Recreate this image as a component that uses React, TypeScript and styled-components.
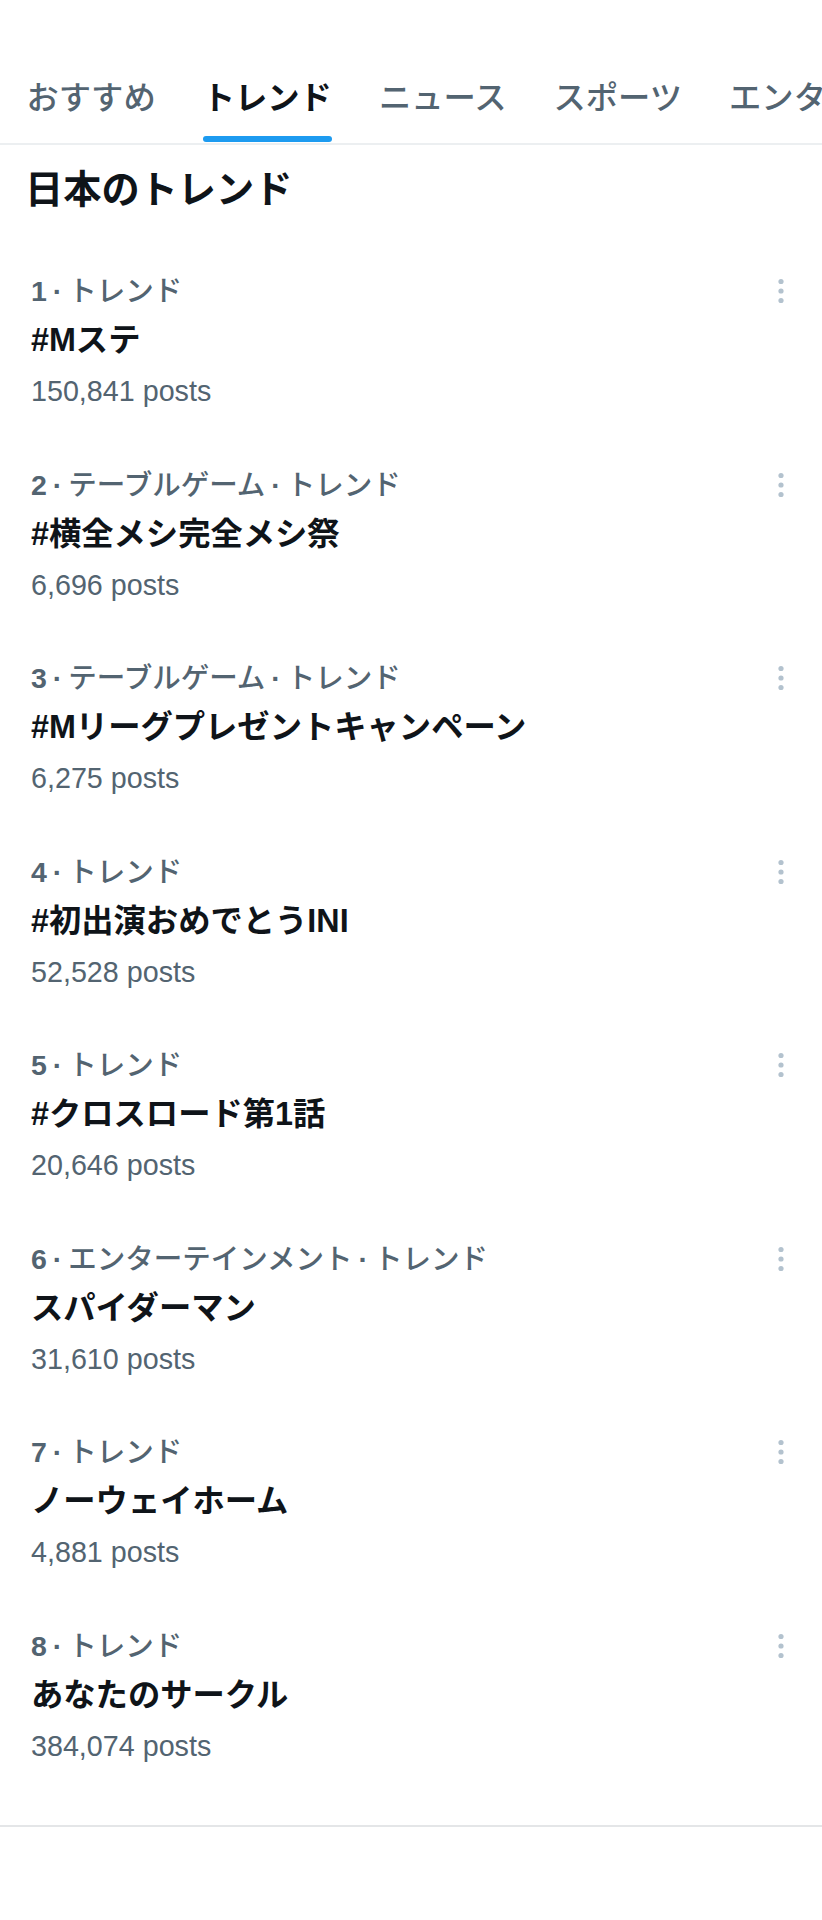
import { type FC } from 'react'
import styled, { createGlobalStyle } from 'styled-components'

const GlobalStyle = createGlobalStyle`
  body {
    margin: 0;
    background: #ffffff;
    font-family: "Liberation Sans", "Noto Sans CJK JP", sans-serif;
    color: #0f1419;
  }
`

type Trend = { rank: number; category?: string; name: string; posts: string }

const trends: Trend[] = [
  { rank: 1, name: '#Mステ', posts: '150,841' },
  { rank: 2, category: 'テーブルゲーム', name: '#横全メシ完全メシ祭', posts: '6,696' },
  { rank: 3, category: 'テーブルゲーム', name: '#Mリーグプレゼントキャンペーン', posts: '6,275' },
  { rank: 4, name: '#初出演おめでとうINI', posts: '52,528' },
  { rank: 5, name: '#クロスロード第1話', posts: '20,646' },
  { rank: 6, category: 'エンターテインメント', name: 'スパイダーマン', posts: '31,610' },
  { rank: 7, name: 'ノーウェイホーム', posts: '4,881' },
  { rank: 8, name: 'あなたのサークル', posts: '384,074' },
]

const tabs = ['おすすめ', 'トレンド', 'ニュース', 'スポーツ', 'エンターテインメント']

const Page = styled.div`
  width: 822px;
  min-height: 1920px;
  background: #ffffff;
`

const TabBar = styled.nav`
  display: flex;
  align-items: flex-end;
  height: 143px;
  padding-left: 3px;
  overflow: hidden;
  border-bottom: 2px solid #eceff1;
`

const Tab = styled.div<{ $active?: boolean }>`
  flex-shrink: 0;
  display: flex;
  flex-direction: column;
  align-items: center;
  padding: 0 23.5px;
  font-size: 32.3px;
  line-height: 40px;
  font-weight: ${({ $active }) => ($active ? 700 : 500)};
  color: ${({ $active }) => ($active ? '#0f1419' : '#536471')};
  white-space: nowrap;
`

const Indicator = styled.div<{ $active?: boolean }>`
  align-self: stretch;
  height: 6px;
  margin-top: 18px;
  margin-bottom: 1px;
  border-radius: 3px;
  background: ${({ $active }) => ($active ? '#1d9bf0' : 'transparent')};
`

const Heading = styled.h2`
  margin: 0;
  padding: 21px 25px 30px;
  font-size: 38.2px;
  line-height: 48px;
  font-weight: 700;
  color: #0f1419;
`

const List = styled.div`
  padding-bottom: 33px;
  border-bottom: 2px solid #e4e6e8;
`

const Item = styled.div`
  display: flex;
  flex-direction: column;
  padding: 29px 31px 28.5px 31px;
`

const MetaRow = styled.div`
  display: flex;
  align-items: center;
  justify-content: space-between;
  height: 36px;
`

const Meta = styled.span`
  font-size: 28.5px;
  line-height: 36px;
  font-weight: 500;
  color: #536471;
`

const Rank = styled.span`
  font-weight: 700;
`

const Sep = styled.span`
  margin: 0 6px;
  font-weight: 700;
`

const Title = styled.div`
  margin-top: 9px;
  font-size: 32.3px;
  line-height: 44px;
  font-weight: 700;
  color: #0f1419;
`

const Posts = styled.div`
  margin-top: 11px;
  font-size: 28.7px;
  line-height: 36px;
  color: #536471;
`

const MoreIcon: FC = () => (
  <svg width="20" height="30" viewBox="0 0 20 30" aria-hidden="true">
    <circle cx="10" cy="5.5" r="2.6" fill="#b3c2ce" />
    <circle cx="10" cy="15" r="2.6" fill="#b3c2ce" />
    <circle cx="10" cy="24.5" r="2.6" fill="#b3c2ce" />
  </svg>
)

const App: FC = () => (
  <Page>
    <GlobalStyle />
    <TabBar>
      {tabs.map((t) => (
        <Tab key={t} $active={t === 'トレンド'}>
          {t}
          <Indicator $active={t === 'トレンド'} />
        </Tab>
      ))}
    </TabBar>
    <Heading>日本のトレンド</Heading>
    <List>
      {trends.map(({ rank, category, name, posts }) => (
        <Item key={rank}>
          <MetaRow>
            <Meta>
              <Rank>{rank}</Rank>
              <Sep>·</Sep>
              {category && (
                <>
                  {category}
                  <Sep>·</Sep>
                </>
              )}
              トレンド
            </Meta>
            <MoreIcon />
          </MetaRow>
          <Title>{name}</Title>
          <Posts>{posts} posts</Posts>
        </Item>
      ))}
    </List>
  </Page>
)

export default App
